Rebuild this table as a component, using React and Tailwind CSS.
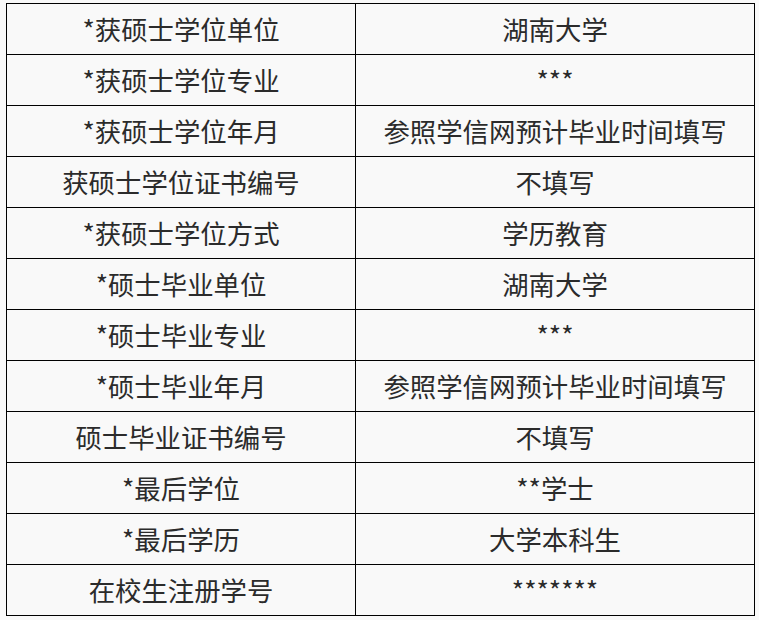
const rows = [
  ["*获硕士学位单位", "湖南大学"],
  ["*获硕士学位专业", "***"],
  ["*获硕士学位年月", "参照学信网预计毕业时间填写"],
  ["获硕士学位证书编号", "不填写"],
  ["*获硕士学位方式", "学历教育"],
  ["*硕士毕业单位", "湖南大学"],
  ["*硕士毕业专业", "***"],
  ["*硕士毕业年月", "参照学信网预计毕业时间填写"],
  ["硕士毕业证书编号", "不填写"],
  ["*最后学位", "**学士"],
  ["*最后学历", "大学本科生"],
  ["在校生注册学号", "*******"],
];

export default function App() {
  return (
    <div
      className="w-[759px] h-[620px] bg-[#f9f9f9] pt-[3px] pl-[6px]"
      style={{ fontFamily: '"Noto Sans CJK SC", "Noto Sans", sans-serif' }}
    >
      <table className="border-collapse text-[26.4px] text-[#2b2b2b]">
        <tbody>
          {rows.map(([k, v], i) => (
            <tr key={i} className="h-[51px]">
              <td className="w-[349px] border border-black text-center p-0 leading-none">{k}</td>
              <td className="w-[399px] border border-black text-center p-0 leading-none">{v}</td>
            </tr>
          ))}
        </tbody>
      </table>
    </div>
  );
}
